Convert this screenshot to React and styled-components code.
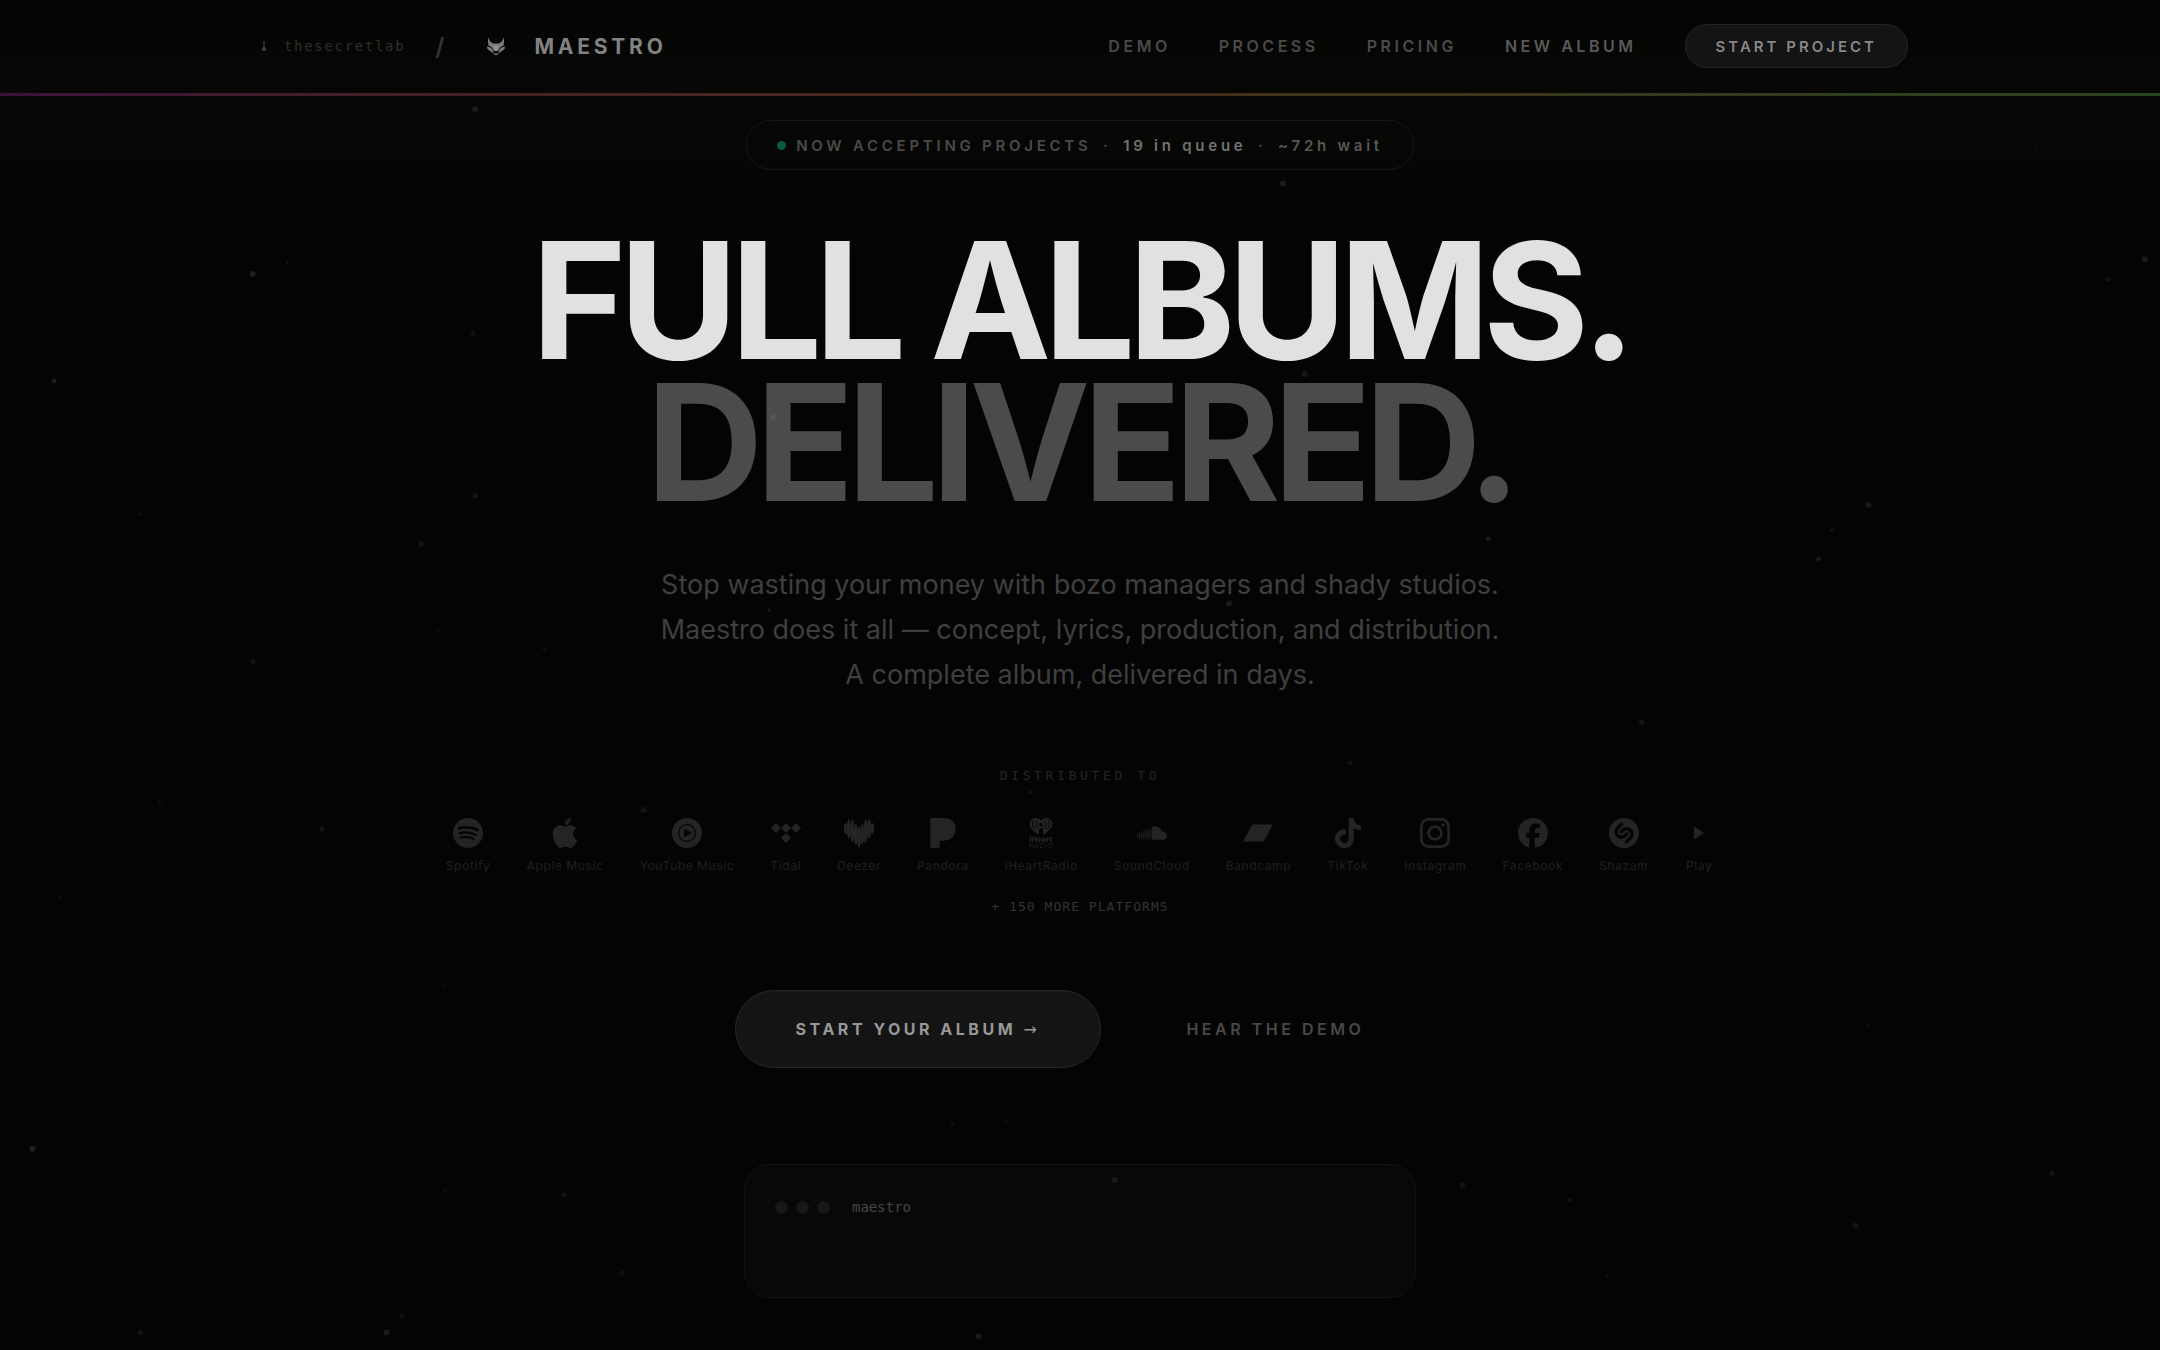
import styled, { createGlobalStyle } from "styled-components";
import {
    SiSpotify, SiApple, SiYoutubemusic, SiTidal, SiPandora, SiIheartradio,
    SiSoundcloud, SiBandcamp, SiTiktok, SiInstagram, SiFacebook, SiShazam,
} from "react-icons/si";

const sans = `Inter, "Liberation Sans", sans-serif`;
const mono = `"DejaVu Sans Mono", "Liberation Mono", monospace`;

const GlobalStyle = createGlobalStyle`
    * {
        box-sizing: border-box;
    }
    body {
        margin: 0;
        background: #040404;
        color: #4b4b4b;
        font-family: ${sans};
        -webkit-font-smoothing: antialiased;
    }
    a {
        color: inherit;
        text-decoration: none;
    }
    button {
        font-family: inherit;
        cursor: pointer;
    }
`;

const Page = styled.div`
    position: relative;
    min-height: 100vh;
    background: linear-gradient(#040404 0, #060604 60px, #060604 150px, #040404 260px);
`;

const Sky = styled.svg`
    position: absolute;
    inset: 0;
    width: 100%;
    height: 100%;
    pointer-events: none;
`;

const Header = styled.header`
    padding: 24px 32px 25px;
`;

const HeaderInner = styled.div`
    display: flex;
    align-items: center;
    justify-content: space-between;
    max-width: 1656px;
    margin: 0 auto;
`;

const Rainbow = styled.div`
    height: 3px;
    background: linear-gradient(90deg, #3c1038, #42202a 15%, #46281e 40%, #3f321a 60%, #36381d 75%, #2b4420);
`;

const Brand = styled.div`
    display: flex;
    align-items: center;
`;

const LabLink = styled.a`
    display: flex;
    align-items: center;
    gap: 8px;
    font-family: ${mono};
    font-size: 14px;
    letter-spacing: 0.12em;
    color: #2e2e2e;
`;

const Slash = styled.span`
    margin: 0 32px 0 30px;
    font-size: 24px;
    font-weight: 600;
    color: #343434;
`;

const BrandLink = styled.a`
    display: flex;
    align-items: center;
    gap: 20px;
    font-size: 21px;
    font-weight: 700;
    letter-spacing: 0.18em;
    color: #828282;
`;

const Nav = styled.nav`
    display: flex;
    align-items: center;
    gap: 48px;
`;

const NavLink = styled.a`
    font-size: 16px;
    line-height: 20px;
    font-weight: 600;
    letter-spacing: 0.22em;
    color: ${({$bright}) => ($bright ? "#595959" : "#4a4a4a")};
`;

const NavButton = styled.button`
    height: 44px;
    padding: 0 30px;
    border: 1px solid #252525;
    border-radius: 22px;
    background: #141414;
    color: #878787;
    font-size: 15px;
    font-weight: 600;
    letter-spacing: 0.2em;
`;

const Hero = styled.main`
    display: flex;
    flex-direction: column;
    align-items: center;
    padding: 24px 32px 51px;
`;

const Status = styled.div`
    display: flex;
    align-items: center;
    gap: 10px;
    height: 50px;
    padding: 0 30px;
    border: 1px solid #171717;
    border-radius: 25px;
    font-size: 15px;
    font-weight: 600;
    letter-spacing: 0.25em;
    color: #4a4a4a;

    strong {
        font-weight: 600;
        color: #727272;
    }
    em {
        font-style: normal;
        color: #585858;
    }
    i {
        margin: 0 4px;
        font-style: normal;
    }
`;

const LiveDot = styled.span`
    width: 9px;
    height: 9px;
    border-radius: 50%;
    background: #0a5a3e;
`;

const Title = styled.h1`
    margin: 59px 0 0;
    font-size: 162px;
    line-height: 142px;
    font-weight: 700;
    letter-spacing: -0.045em;
    text-align: center;
    color: #e1e1e1;

    span {
        display: block;
        color: #4b4b4b;
    }
`;

const Lead = styled.p`
    margin: 49px 0 0;
    max-width: 860px;
    font-size: 27px;
    line-height: 45px;
    text-align: center;
    color: #3f3f3f;
`;

const Caption = styled.p`
    margin: 0;
    font-family: ${mono};
    font-size: 13px;
    line-height: 20px;
    letter-spacing: ${({$wide}) => ($wide ? "0.28em" : "0.08em")};
    color: ${({$wide}) => ($wide ? "#262626" : "#343434")};
`;

const Distribution = styled.section`
    display: flex;
    flex-direction: column;
    align-items: center;
    margin-top: 69px;
`;

const Platforms = styled.ul`
    display: flex;
    flex-wrap: wrap;
    justify-content: center;
    gap: 36px;
    margin: 32px 0 22px;
    padding: 0;
    list-style: none;
`;

const Platform = styled.li`
    display: flex;
    flex-direction: column;
    align-items: center;
    gap: 9px;
    font-size: 12px;
    line-height: 18px;
    font-weight: 500;
    letter-spacing: 0.045em;
    color: #1c1c1c;

    svg {
        width: 30px;
        height: 30px;
        color: #242424;
    }
`;

const Actions = styled.div`
    display: flex;
    gap: 24px;
    margin-top: 73px;
`;

const ActionButton = styled.button`
    height: 78px;
    padding: 0 60px;
    border: 1px solid ${({$primary}) => ($primary ? "#272727" : "transparent")};
    border-radius: 39px;
    background: ${({$primary}) => ($primary ? "#141414" : "transparent")};
    color: ${({$primary}) => ($primary ? "#979797" : "#484848")};
    font-size: 16px;
    font-weight: ${({$primary}) => ($primary ? 700 : 600)};
    letter-spacing: 0.22em;
`;

const Arrow = styled.span`
    font-family: "DejaVu Sans", sans-serif;
    font-weight: 400;
`;

const Terminal = styled.section`
    width: 100%;
    max-width: 672px;
    height: 134px;
    margin-top: 96px;
    padding: 31px 30px;
    border: 1px solid #121212;
    border-radius: 26px;
    background: #080808;
`;

const TerminalBar = styled.div`
    display: flex;
    align-items: center;
    gap: 8px;
    height: 22px;
    font-family: ${mono};
    font-size: 14px;
    color: #464646;

    b {
        margin-left: 14px;
        font-weight: 400;
    }
`;

const Light = styled.span`
    width: 13px;
    height: 13px;
    border-radius: 50%;
    background: #171717;
`;

const platforms = [
    ["Spotify", SiSpotify],
    ["Apple Music", SiApple],
    ["YouTube Music", SiYoutubemusic],
    ["Tidal", SiTidal],
    ["Deezer", DeezerIcon],
    ["Pandora", SiPandora],
    ["iHeartRadio", SiIheartradio],
    ["SoundCloud", SiSoundcloud],
    ["Bandcamp", SiBandcamp],
    ["TikTok", SiTiktok],
    ["Instagram", SiInstagram],
    ["Facebook", SiFacebook],
    ["Shazam", SiShazam],
    ["Play", PlayIcon],
];

// x %, y %, radius, grey level
const stars = [
    [22, 8.1, 3, 26], [59.4, 13.6, 3, 30], [11.7, 20.3, 3, 30], [13.3, 19.4, 2, 16], [21.9, 24.7, 2.5, 17],
    [2.5, 28.2, 2.5, 28], [60.4, 27.7, 3, 22], [99.3, 19.2, 3, 26], [97.6, 20.7, 2.5, 18], [94.3, 10.9, 2, 12],
    [35.8, 30.9, 3, 86], [22, 36.7, 2.5, 22], [6.5, 38.1, 2, 14], [19.5, 40.3, 2.5, 18], [68.9, 39.9, 2.5, 24],
    [86.5, 37.4, 3, 24], [84.8, 39.3, 2, 20], [84.2, 41.4, 2.5, 22], [56.9, 44.7, 3, 24], [35.6, 45.2, 2, 18],
    [11.7, 49, 2.5, 18], [20.3, 46.7, 2, 12], [25.2, 48.1, 2, 13], [76, 53.5, 2.5, 24], [62.5, 56.5, 2.5, 15],
    [47.7, 58.7, 2, 17], [29.8, 60, 3, 19], [14.9, 61.4, 2.5, 20], [7.4, 59.4, 2, 12], [2.8, 66.5, 2, 12],
    [20.5, 73, 2, 12], [86.5, 76, 2, 12], [44.1, 83.2, 2, 16], [46.6, 83.1, 2, 14], [1.5, 85.1, 3, 30],
    [26.1, 88.5, 2.5, 18], [20.6, 88.2, 2, 15], [51.6, 87.4, 3, 26], [67.7, 87.8, 2.5, 22], [72.7, 88.9, 2, 18],
    [95, 86.9, 2.5, 22], [85.9, 90.8, 3, 19], [28.8, 94.3, 2.5, 15], [74.4, 94.5, 2, 15], [6.5, 98.7, 2.5, 20],
    [17.9, 98.7, 3, 25], [18.6, 97.5, 2, 18], [45.3, 99, 3, 25],
];

function PlayIcon() {
    return (
        <svg viewBox="0 0 30 30" fill="currentColor" aria-hidden="true">
            <path d="M10 8.5v13L20 15z" />
        </svg>
    );
}

// heart made of pointed equalizer bars: x, y and half height of each
const deezerBars = [
    [1.7, 10.5, 5.5], [4.9, 10.8, 9.8], [8.4, 13, 11.5], [11.8, 16.2, 10.6], [15, 19, 10.8],
    [18.2, 16.2, 10.6], [21.6, 13, 11.5], [25.1, 10.8, 9.8], [28.3, 10.5, 5.5],
];

function DeezerIcon() {
    return (
        <svg viewBox="0 0 30 30" fill="currentColor" aria-hidden="true">
            {deezerBars.map(([x, y, h]) => (
                <ellipse key={x} cx={x} cy={y} rx={2} ry={h} />
            ))}
        </svg>
    );
}

function LabIcon() {
    return (
        <svg width="24" height="24" viewBox="0 0 24 24" fill="#454545" aria-hidden="true">
            <path d="M11.500 7h1v5.500l1.600 2.800q.2 1.700-2.100 1.700t-2.100-1.700l1.600-2.800z" />
        </svg>
    );
}

function FoxIcon() {
    return (
        <svg width="38" height="38" viewBox="0 0 38 38" aria-hidden="true">
            <g fill="#7a7a7a">
                <path d="M12.500 10.500l1.500 3.700 3.200 2.300h5.600l3.200-2.300 1.500-3.700.6 3.500-.5 4.200-3.700 2.600-1.900 3.200h-4l-1.900-3.200-3.700-2.600-.5-4.200z" />
                <path d="M11.300 19l4.500 2.500 1.700 3-.6 1-3.600-1.900-2.100-1.800zM28.700 19l-4.500 2.500-1.700 3 .6 1 3.600-1.900 2.100-1.800z" />
                <path d="M14.500 24.600l3.500 1.500 2 1 2-1 3.500-1.500-5.500 3.900z" />
            </g>
            <path d="M17 18.500h6l-2 5.500h-2z" fill="#929292" />
        </svg>
    );
}

function Stars() {
    return (
        <Sky aria-hidden="true">
            {stars.map(([x, y, r, level]) => (
                <circle key={`${x}-${y}`} cx={`${x}%`} cy={`${y}%`} r={r} fill={`rgb(${level}, ${level}, ${level})`} />
            ))}
        </Sky>
    );
}

export default function App() {
    return (
        <Page>
            <GlobalStyle />
            <Header>
                <HeaderInner>
                    <Brand>
                        <LabLink href="#lab"><LabIcon />thesecretlab</LabLink>
                        <Slash>/</Slash>
                        <BrandLink href="#top"><FoxIcon />MAESTRO</BrandLink>
                    </Brand>
                    <Nav>
                        <NavLink href="#demo">DEMO</NavLink>
                        <NavLink href="#process">PROCESS</NavLink>
                        <NavLink href="#pricing">PRICING</NavLink>
                        <NavLink href="#new" $bright>NEW ALBUM</NavLink>
                        <NavButton>START PROJECT</NavButton>
                    </Nav>
                </HeaderInner>
            </Header>
            <Rainbow />
            <Hero>
                <Status>
                    <LiveDot />
                    <span>
                        NOW ACCEPTING PROJECTS <i>·</i> <strong>19 in queue</strong> <i>·</i> <em>~72h wait</em>
                    </span>
                </Status>
                <Title>FULL ALBUMS.<span>DELIVERED.</span></Title>
                <Lead>
                    Stop wasting your money with bozo managers and shady studios.
                    Maestro does it all — concept, lyrics, production, and distribution.
                    A complete album, delivered in days.
                </Lead>
                <Distribution>
                    <Caption $wide>DISTRIBUTED TO</Caption>
                    <Platforms>
                        {platforms.map(([name, Icon]) => (
                            <Platform key={name}><Icon />{name}</Platform>
                        ))}
                    </Platforms>
                    <Caption>+ 150 MORE PLATFORMS</Caption>
                </Distribution>
                <Actions>
                    <ActionButton $primary>START YOUR ALBUM <Arrow>→</Arrow></ActionButton>
                    <ActionButton>HEAR THE DEMO</ActionButton>
                </Actions>
                <Terminal>
                    <TerminalBar>
                        <Light />
                        <Light />
                        <Light />
                        <b>maestro</b>
                    </TerminalBar>
                </Terminal>
            </Hero>
            <Stars />
        </Page>
    );
}
